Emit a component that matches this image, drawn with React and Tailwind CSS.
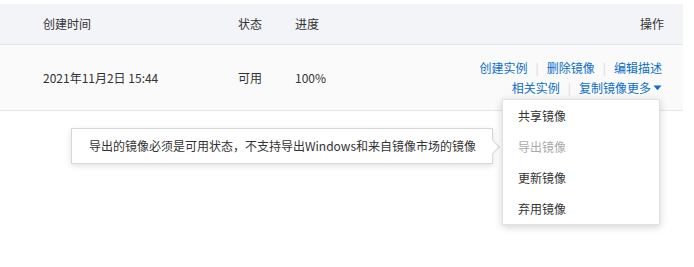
export default function App() {
  const font = { fontFamily: '"Noto Sans CJK SC", "Liberation Sans", sans-serif' }
  return (
    <div className="relative w-[694px] h-[267px] bg-white overflow-hidden text-[12px] text-[#333]" style={font}>
      <div className="w-[683px] pt-[4px]">
        {/* header */}
        <div className="flex items-center h-[41px] bg-[#f2f4f7] border-b border-[#e3e5e9]">
          <div className="w-[238px] pl-[43px]">创建时间</div>
          <div className="w-[57px]">状态</div>
          <div className="flex-1">进度</div>
          <div className="pr-[19px]">操作</div>
        </div>
        {/* row */}
        <div className="flex items-center h-[66px] bg-[#fafafa] border-b border-[#e6e7ea]">
          <div className="w-[238px] pl-[43px]">2021年11月2日 15:44</div>
          <div className="w-[57px]">可用</div>
          <div className="flex-1">100%</div>
          <div className="pr-[21px] flex flex-col items-end leading-[20px] text-[#0b6fcb]">
            <div className="flex items-center">
              <span>创建实例</span>
              <span className="mx-[8px] text-[#d9d9d9]">|</span>
              <span>删除镜像</span>
              <span className="mx-[8px] text-[#d9d9d9]">|</span>
              <span>编辑描述</span>
            </div>
            <div className="flex items-center">
              <span>相关实例</span>
              <span className="mx-[8px] text-[#d9d9d9]">|</span>
              <span>复制镜像</span>
              <span>更多</span>
              <svg width="9" height="6" viewBox="0 0 9 6" className="ml-[2px]">
                <path d="M0.5 0.5 L8.5 0.5 L4.5 5.2 Z" fill="#0b6fcb" />
              </svg>
            </div>
          </div>
        </div>
      </div>

      {/* tooltip */}
      <div className="absolute left-[71px] top-[128px] w-[422px] h-[36px] bg-white border border-[#d8d8d8] shadow-[0_2px_6px_rgba(0,0,0,0.12)] flex items-center pl-[17px] text-[12px] text-[#333]">
        导出的镜像必须是可用状态，不支持导出Windows和来自镜像市场的镜像
        <div className="absolute right-[-6px] top-[13px] w-[10px] h-[10px] bg-white border-t border-r border-[#d8d8d8] rotate-45" />
      </div>

      {/* dropdown */}
      <div className="absolute left-[502px] top-[99px] w-[158px] bg-white border border-[#e2e2e2] shadow-[0_2px_8px_rgba(0,0,0,0.18)] text-[12px]">
        <div className="h-[31px] flex items-center pl-[15px] text-[#333]">共享镜像</div>
        <div className="h-[31px] flex items-center pl-[15px] text-[#aaa]">导出镜像</div>
        <div className="h-[31px] flex items-center pl-[15px] text-[#333]">更新镜像</div>
        <div className="h-[31px] flex items-center pl-[15px] text-[#333]">弃用镜像</div>
      </div>
    </div>
  )
}
